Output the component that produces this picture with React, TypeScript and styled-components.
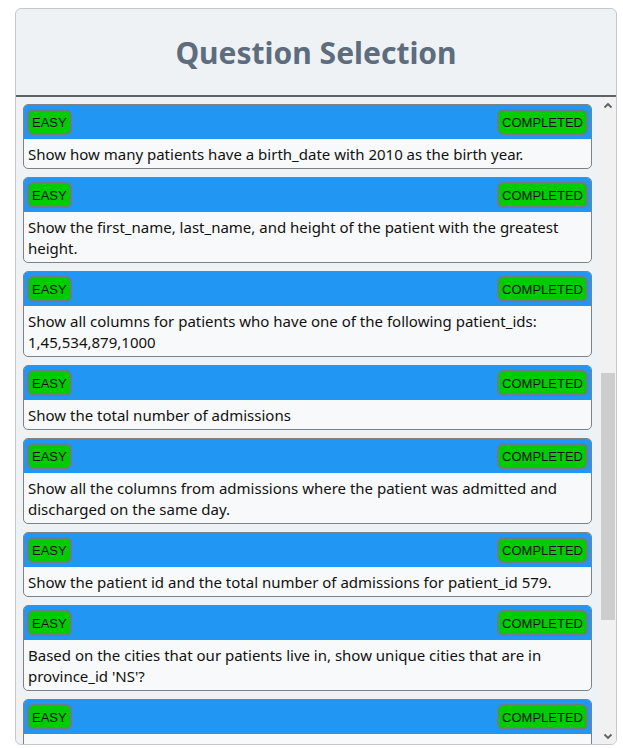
import React, { useLayoutEffect, useRef } from 'react';
import styled, { createGlobalStyle } from 'styled-components';

const GlobalStyle = createGlobalStyle`
  html, body {
    margin: 0;
    padding: 0;
    background: #ffffff;
  }
`;

const Page = styled.div`
  padding: 8px 6px 0 15px;
  font-family: 'Noto Sans', 'Open Sans', sans-serif;
`;

const Card = styled.div`
  height: 737px;
  display: flex;
  flex-direction: column;
  border: 1px solid #c4c8cc;
  border-radius: 6px;
  background: #eff2f5;
  overflow: hidden;
  box-sizing: border-box;
`;

const Header = styled.div`
  height: 86px;
  flex: none;
  display: flex;
  align-items: center;
  justify-content: center;
  border-bottom: 2px solid #5f6367;
`;

const Title = styled.h1`
  margin: 0;
  font-size: 30px;
  font-weight: 700;
  color: #5d6d7e;
`;

const Body = styled.div`
  flex: 1;
  min-height: 0;
  display: flex;
`;

const List = styled.div`
  flex: 1;
  overflow: hidden;
  padding: 7px 8px 7px 7px;
  display: flex;
  flex-direction: column;
  gap: 8px;
`;

const ScrollBar = styled.div`
  width: 16px;
  flex: none;
  display: flex;
  flex-direction: column;
  background: #f1f1f1;
`;

const ScrollButton = styled.div`
  height: 17px;
  flex: none;
  display: flex;
  align-items: center;
  justify-content: center;
  color: #606060;
`;

const ScrollTrack = styled.div`
  flex: 1;
  display: flex;
  flex-direction: column;
`;

const Thumb = styled.div<{ $top: number; $size: number }>`
  margin: ${(p) => p.$top}px 1px 0 1px;
  height: ${(p) => p.$size}px;
  background: #cdcdcd;
`;

const Item = styled.div`
  flex: none;
  border: 1px solid #7d8286;
  border-radius: 5px;
  overflow: hidden;
  background: #f8f9fa;
`;

const ItemHead = styled.div`
  background: #2196f3;
  height: 34px;
  padding: 0 3px;
  display: flex;
  align-items: center;
  justify-content: space-between;
`;

const Badge = styled.span`
  font-family: 'Liberation Sans', Arial, sans-serif;
  font-size: 13px;
  color: #111;
  background: #00cc00;
  border: 2px solid #6b7d8a;
  border-radius: 6px;
  height: 26px;
  box-sizing: border-box;
  padding: 0 3px;
  display: flex;
  align-items: center;
`;

const ItemText = styled.div`
  padding: 5px 4px 3px 4px;
  font-size: 15px;
  line-height: 21px;
  color: #111;
`;

const Chevron = ({ down }: { down?: boolean }) => (
  <svg width="10" height="8" viewBox="0 0 10 8">
    <path
      d={down ? 'M1.5 2.5 L5 6 L8.5 2.5' : 'M1.5 5.5 L5 2 L8.5 5.5'}
      fill="none"
      stroke="currentColor"
      strokeWidth="1.8"
    />
  </svg>
);

const questions = [
  "Show first name, last name, and gender of patients whose gender is 'M'",
  'Show first name and last name of patients who does not have allergies. (null)',
  "Show first name of patients that start with the letter 'C'",
  'Show first name and last name of patients that weight within the range of 100 to 120 (inclusive)',
  "Update the patients table for the allergies column. If the patient's allergies is null then replace it with 'NKA'",
  'Show first name and last name concatinated into one column to show their full name.',
  "Show first name, last name, and the full province name of each patient. Example: 'Ontario' instead of 'ON'",
  'Show how many patients have a birth_date with 2010 as the birth year.',
  'Show the first_name, last_name, and height of the patient with the greatest height.',
  'Show all columns for patients who have one of the following patient_ids: 1,45,534,879,1000',
  'Show the total number of admissions',
  'Show all the columns from admissions where the patient was admitted and discharged on the same day.',
  'Show the patient id and the total number of admissions for patient_id 579.',
  "Based on the cities that our patients live in, show unique cities that are in province_id 'NS'?",
  'Write a query to find the first_name, last name and birth date of patients who has height greater than 160 and weight greater than 70',
  'Write a query to find list of patients first_name, last_name, and allergies from Hamilton where allergies are not null',
  'Based on cities where our patient lives in, write a query to display a list of unique city starting with a vowel (a, e, i, o, u). Show the result order in ascending by city.',
];

const FIRST_SHOWN = 7;

export default function App() {
  const listRef = useRef<HTMLDivElement>(null);
  const itemRefs = useRef<(HTMLDivElement | null)[]>([]);

  useLayoutEffect(() => {
    const list = listRef.current;
    const target = itemRefs.current[FIRST_SHOWN];
    if (list && target) {
      list.scrollTop = target.offsetTop - list.offsetTop - 7;
    }
  }, []);

  return (
    <Page>
      <GlobalStyle />
      <Card>
        <Header>
          <Title>Question Selection</Title>
        </Header>
        <Body>
          <List ref={listRef}>
            {questions.map((q, i) => (
              <Item key={i} ref={(el) => { itemRefs.current[i] = el; }}>
                <ItemHead>
                  <Badge>EASY</Badge>
                  <Badge>COMPLETED</Badge>
                </ItemHead>
                <ItemText>{q}</ItemText>
              </Item>
            ))}
          </List>
          <ScrollBar>
            <ScrollButton>
              <Chevron />
            </ScrollButton>
            <ScrollTrack>
              <Thumb $top={259} $size={247} />
            </ScrollTrack>
            <ScrollButton>
              <Chevron down />
            </ScrollButton>
          </ScrollBar>
        </Body>
      </Card>
    </Page>
  );
}
